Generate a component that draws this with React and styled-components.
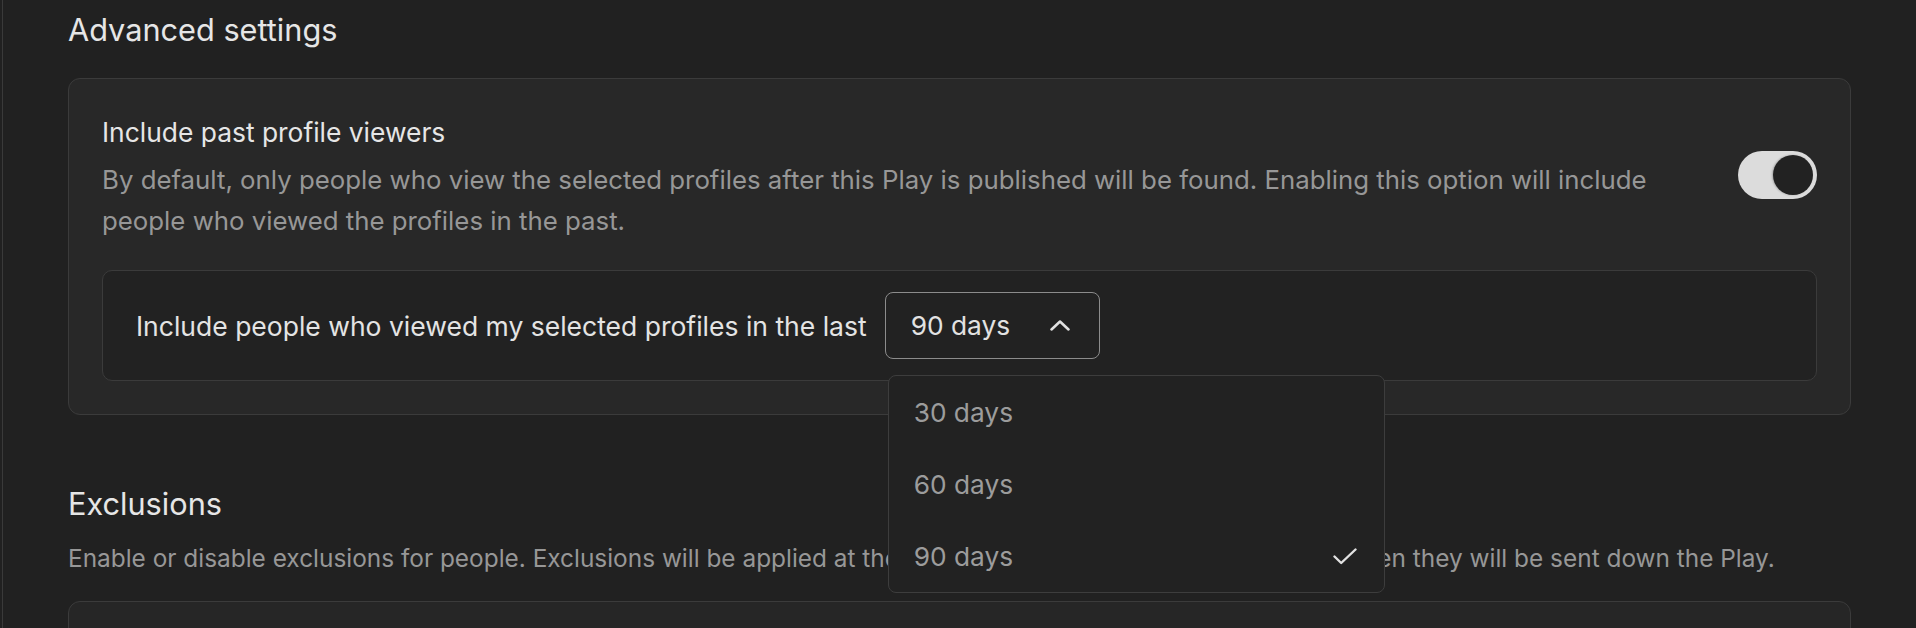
import React from 'react'
import styled, { createGlobalStyle } from 'styled-components'

const GlobalStyle = createGlobalStyle`
  * { box-sizing: border-box; }
  body {
    margin: 0;
    background: #212121;
    font-family: Inter, "Noto Sans", sans-serif;
    -webkit-font-smoothing: antialiased;
  }
`;

const ChevronUp = () => (
  <svg width="20" height="11" viewBox="0 0 20 11" fill="none">
    <path d="M1.5 9.5 10 1.5l8.5 8" stroke="#e2e2e2" strokeWidth="2.5" strokeLinecap="round" strokeLinejoin="round" />
  </svg>
);

const CheckMark = () => (
  <svg width="24" height="17" viewBox="0 0 24 17" fill="none">
    <path d="M1.5 8.5 8.2 15 22.5 1.5" stroke="#e2e2e2" strokeWidth="2.4" strokeLinecap="round" strokeLinejoin="round" />
  </svg>
);

const options = ['30 days', '60 days', '90 days'];

const App = () => {
  const selected = '90 days';
  return (
    <>
      <GlobalStyle />
      <Page>
        <SectionTitle>Advanced settings</SectionTitle>
        <Card>
          <OptionRow>
            <OptionText>
              <OptionTitle>Include past profile viewers</OptionTitle>
              <OptionDescription>
                By default, only people who view the selected profiles after this Play is published will be found. Enabling this option will include people who viewed the profiles in the past.
              </OptionDescription>
            </OptionText>
            <Toggle $on aria-label="Include past profile viewers">
              <Knob />
            </Toggle>
          </OptionRow>
          <RangeRow>
            <RangeLabel>Include people who viewed my selected profiles in the last</RangeLabel>
            <SelectWrap>
              <SelectButton>
                <span>{selected}</span>
                <ChevronUp />
              </SelectButton>
              <Menu>
                {options.map((o) => (
                  <MenuItem key={o}>
                    <span>{o}</span>
                    {o === selected && <CheckMark />}
                  </MenuItem>
                ))}
              </Menu>
            </SelectWrap>
          </RangeRow>
        </Card>

        <SectionTitle $spaced>Exclusions</SectionTitle>
        <SectionDescription>
          Enable or disable exclusions for people. Exclusions will be applied at the moment people are found, and again, when they will be sent down the Play.
        </SectionDescription>
        <EmptyCard />
      </Page>
    </>
  )
}

export default App;

const Page = styled.div`
height: 628px;
overflow: hidden;
margin-left: 2px;
border-left: 1px solid #3a3a3a;
padding: 12px 65px 0 65px;
`;

const SectionTitle = styled.h2`
margin: ${(p) => (p.$spaced ? '71px' : '0')} 0 0;
font-size: 30.7px;
line-height: 36px;
font-weight: 400;
color: #e6e6e6;
`;

const Card = styled.div`
margin-top: 30px;
background: #282828;
border: 1px solid #3b3b3b;
border-radius: 12px;
padding: 37px 33px 33px;
`;

const OptionRow = styled.div`
display: flex;
align-items: center;
justify-content: space-between;
gap: 40px;
`;

const OptionText = styled.div`
flex: 1;
`;

const OptionTitle = styled.div`
font-size: 26.4px;
line-height: 32px;
color: #e6e6e6;
`;

const OptionDescription = styled.p`
margin: 11px 0 0;
font-size: 25.8px;
line-height: 41px;
color: #979797;
`;

const Toggle = styled.button`
flex: none;
width: 79px;
height: 48px;
margin-top: -8px;
border: none;
border-radius: 24px;
background: ${(p) => (p.$on ? '#dcdcdc' : '#555')};
padding: 4px;
display: flex;
justify-content: ${(p) => (p.$on ? 'flex-end' : 'flex-start')};
cursor: pointer;
`;

const Knob = styled.span`
width: 40px;
height: 40px;
border-radius: 50%;
background: #222;
box-shadow: -1px 0 2px rgba(0, 0, 0, 0.25);
`;

const RangeRow = styled.div`
margin-top: 29px;
height: 111px;
display: flex;
align-items: center;
gap: 18px;
padding: 0 33px;
background: #222;
border: 1px solid #3b3b3b;
border-radius: 10px;
`;

const RangeLabel = styled.span`
font-size: 26.5px;
color: #e4e4e4;
`;

const SelectWrap = styled.div`
position: relative;
`;

const SelectButton = styled.div`
width: 215px;
height: 67px;
display: flex;
align-items: center;
justify-content: space-between;
padding: 0 29px 0 25px;
border: 1.5px solid #8c8c8c;
border-radius: 8px;
font-size: 26.3px;
color: #e2e2e2;
`;

const Menu = styled.div`
position: absolute;
z-index: 10;
left: 3px;
top: calc(100% + 16px);
width: 497px;
background: #222;
border: 1.5px solid #3d3d3d;
border-radius: 8px;
`;

const MenuItem = styled.div`
height: 72px;
display: flex;
align-items: center;
justify-content: space-between;
padding: 0 27px 0 25px;
font-size: 26.3px;
color: #9c9c9c;
`;

const SectionDescription = styled.p`
margin: 16px 0 0;
font-size: 24.4px;
line-height: 40px;
color: #979797;
white-space: nowrap;
`;

const EmptyCard = styled.div`
margin-top: 23px;
height: 200px;
background: #262626;
border: 1px solid #3b3b3b;
border-radius: 12px;
`;
